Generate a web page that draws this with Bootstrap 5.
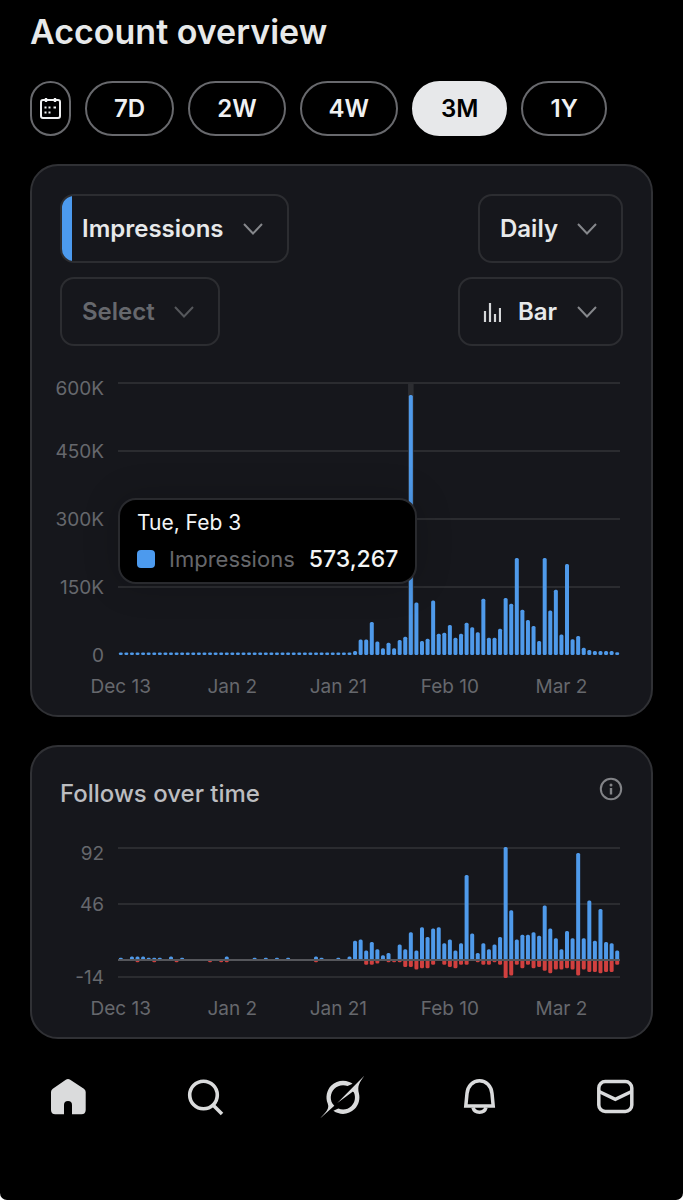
<!DOCTYPE html>
<html lang="en">
<head>
<meta charset="utf-8">
<meta name="viewport" content="width=device-width, initial-scale=1">
<title>Account overview</title>
<link rel="stylesheet" href="https://cdn.jsdelivr.net/npm/bootstrap@5.3.0/dist/css/bootstrap.min.css">
<style>
  :root { --accent: #4c9aee; --line: #2c2d31; --dim: #66686d; }
  body { background: #fff; font-family: Inter, "Liberation Sans", sans-serif; }
  .app { background: #000; color: #e7e9ea; border-radius: 0 0 7px 7px; }
  .page-body { padding: 12px 30px 0; }
  .page-title { font-size: 34px; line-height: 40px; font-weight: 600; margin: 0 0 29px; }
  .ranges { gap: 14px; margin-bottom: 28px; }
  .range-btn { height: 55px; border: 2px solid #68696d; border-radius: 28px; padding: 0 27px; color: #f0f1f2; background: #000; font-size: 24px; line-height: 30px; font-weight: 600; }
  .range-btn:hover { border-color: #68696d; color: #fff; }
  .range-btn.active { background: #e7e8ea; color: #000; border-color: #e7e8ea; }
  .range-btn.cal { padding: 0 7px; }
  .panel { background: #16171c; border: 2px solid #303135; border-radius: 28px; }
  .panel + .panel { margin-top: 28px; }
  .controls { gap: 14px; padding: 28px 28px 0; }
  .picker.form-select { height: 69px; width: auto; color: #e7e9ea; background-color: transparent; border: 2px solid var(--line); border-radius: 14px; padding: 0 63px 0 20px; font-size: 24px; line-height: 30px; font-weight: 600;
    background-image: var(--chevron); background-repeat: no-repeat; background-position: right 24px center; background-size: 20px 12px;
    --chevron: url("data:image/svg+xml,%3csvg xmlns='http://www.w3.org/2000/svg' viewBox='0 0 20 12'%3e%3cpath fill='none' stroke='%2385878b' stroke-width='2' d='M1 1l9 9.500 9-9.500'/%3e%3c/svg%3e"); }
  .picker.form-select.primary { background-image: var(--chevron), linear-gradient(var(--accent), var(--accent)); background-position: right 24px center, left center; background-size: 20px 12px, 10px 100%; }
  .picker.form-select.empty { color: var(--dim);
    --chevron: url("data:image/svg+xml,%3csvg xmlns='http://www.w3.org/2000/svg' viewBox='0 0 20 12'%3e%3cpath fill='none' stroke='%2355575b' stroke-width='2' d='M1 1l9 9.500 9-9.500'/%3e%3c/svg%3e"); }
  .picker.form-select.kind { padding-left: 58px;
    background-image: var(--chevron), url("data:image/svg+xml,%3csvg xmlns='http://www.w3.org/2000/svg' viewBox='0 0 18 20'%3e%3cpath fill='none' stroke='%23d5d7d9' stroke-width='2.200' d='M2 20V9M7 20V1M12 20v-8M17 20V6'/%3e%3c/svg%3e");
    background-position: right 24px center, left 23px center; background-size: 20px 12px, 18px 20px; }
  .chart { padding: 0 31px 16px 20px; color: var(--dim); font-size: 19px; line-height: 20px; display: grid; grid-template-columns: 52px minmax(0, 1fr); column-gap: 14px; }
  .chart.main { margin-top: 37px; }
  .y-axis { display: grid; justify-items: end; align-items: start; height: 272px; grid-template-rows: repeat(4, 68px) 0; }
  .y-axis.short { height: 129px; grid-template-rows: 56px 73px 0; }
  .y-axis span { margin-top: -9px; }
  .y-axis span:first-child { margin-top: -4px; }
  .plot svg { display: block; width: 100%; height: 272px; overflow: visible; }
  .plot.short svg { height: 129px; }
  .x-axis { grid-column: 2; display: grid; grid-template-columns: repeat(90, minmax(0, 1fr)); margin-top: 20px; line-height: 24px; }
  .x-axis span { justify-self: center; white-space: nowrap; grid-row: 1; }
  .tip { top: 115px; left: 0; background: #000; border: 2px solid #292a2e; border-radius: 18px; padding: 8px 17px; font-size: 22px; line-height: 30px; color: #f4f5f6; white-space: nowrap; box-shadow: 0 0 36px rgba(0,0,0,.18); }
  .tip-date { font-size: 21px; }
  .tip-row { margin-top: 6px; }
  .swatch { width: 18px; height: 18px; border-radius: 4px; background: var(--accent); margin-right: 14px; }
  .tip-name { color: #66676b; margin-right: 14px; }
  .tip-value { font-size: 23px; font-weight: 500; }
  .panel-head { padding: 28px 28px 0; height: 101px; }
  .panel-title { font-size: 24px; line-height: 38px; font-weight: 500; color: #bcbdc0; }
  .tabbar { margin-top: 36px; padding-bottom: 70px; color: #dadbdc; }
  .tab-link { flex: 1 1 0; display: flex; justify-content: center; color: inherit; }
</style>
</head>
<body>
<div class="app min-vh-100 d-flex flex-column">
  <main class="page-body">
    <h1 class="page-title">Account overview</h1>

    <div class="ranges d-flex">
      <button type="button" class="btn range-btn cal d-flex align-items-center" aria-label="Pick dates">
        <svg width="23" height="24" viewBox="0 0 23 24" fill="none" stroke="currentColor" stroke-width="2"><rect x="2" y="3" width="19" height="18" rx="2"/><path d="M7 1v4M16 1v4" stroke-width="2.400"/><path d="M9.500 10.500h2M14.500 10.500h2.500M5.500 10.500h2M5.500 15.500h2M9.500 15.500h2" stroke-width="2.200"/></svg>
      </button>
      <button type="button" class="btn range-btn">7D</button>
      <button type="button" class="btn range-btn">2W</button>
      <button type="button" class="btn range-btn">4W</button>
      <button type="button" class="btn range-btn active" aria-pressed="true">3M</button>
      <button type="button" class="btn range-btn">1Y</button>
    </div>

    <section class="panel" aria-label="Impressions">
      <div class="controls d-flex flex-column">
        <div class="d-flex justify-content-between">
          <select class="form-select picker primary" aria-label="Primary metric"><option>Impressions</option></select>
          <select class="form-select picker" aria-label="Interval"><option>Daily</option></select>
        </div>
        <div class="d-flex justify-content-between">
          <select class="form-select picker empty" aria-label="Secondary metric"><option>Select</option></select>
          <select class="form-select picker kind" aria-label="Chart type"><option>Bar</option></select>
        </div>
      </div>
      <div class="chart main">
        <div class="y-axis"><span>600K</span><span>450K</span><span>300K</span><span>150K</span><span>0</span></div>
        <div class="plot position-relative">
          <svg id="impressions" viewBox="0 0 502 272" preserveAspectRatio="none" role="img" aria-label="Daily impressions"></svg>
          <div class="tip position-absolute">
            <div class="tip-date">Tue, Feb 3</div>
            <div class="tip-row d-flex align-items-center"><span class="swatch"></span><span class="tip-name">Impressions</span><span class="tip-value">573,267</span></div>
          </div>
        </div>
        <div class="x-axis"></div>
      </div>
    </section>

    <section class="panel" aria-label="Follows over time">
      <div class="panel-head d-flex justify-content-between align-items-start">
        <h2 class="panel-title m-0">Follows over time</h2>
        <button type="button" class="btn p-0 border-0 d-flex" aria-label="About this chart">
          <svg width="24" height="28" viewBox="0 -2 24 28" fill="none" stroke="#828387" stroke-width="2"><circle cx="12" cy="12" r="10.200"/><path d="M12 11v6.500" stroke-width="2.400"/><circle cx="12" cy="8" r="1.500" fill="#828387" stroke="none"/></svg>
        </button>
      </div>
      <div class="chart">
        <div class="y-axis short"><span>92</span><span>46</span><span>-14</span></div>
        <div class="plot short">
          <svg id="follows" viewBox="0 0 502 129" preserveAspectRatio="none" role="img" aria-label="Daily follows and unfollows"></svg>
        </div>
        <div class="x-axis"></div>
      </div>
    </section>
  </main>

  <nav class="tabbar d-flex" aria-label="Main">
    <a href="#" class="tab-link" aria-label="Home"><svg width="44" height="44" viewBox="0 0 44 44" fill="currentColor"><path d="M19.800 4.700a4 4 0 0 1 4.400 0l13.700 9a4 4 0 0 1 1.800 3.300V35a4.300 4.300 0 0 1-4.300 4.200H26V30a4 4 0 0 0-8 0v9.200H9.300A4.300 4.300 0 0 1 5 35V17a4 4 0 0 1 1.800-3.300z"/></svg></a>
    <a href="#" class="tab-link" aria-label="Search"><svg width="44" height="44" viewBox="0 0 44 44" fill="none" stroke="currentColor" stroke-width="3.600"><circle cx="20.500" cy="20" r="13.800"/><path d="M30 30l9 9"/></svg></a>
    <a href="#" class="tab-link" aria-label="Grok"><svg width="44" height="44" viewBox="-1 0 33 32" overflow="visible" fill="currentColor"><path d="M12.745 20.540l10.970-8.190c.539-.4 1.307-.244 1.564.38 1.349 3.288.746 7.241-1.938 9.955-2.683 2.714-6.417 3.310-9.830 1.954l-3.728 1.745c5.347 3.697 11.840 2.782 15.898-1.324 3.219-3.255 4.216-7.692 3.284-11.693l.008.009c-1.351-5.878.332-8.227 3.782-13.031L33 0l-4.540 4.590v-.014L12.743 20.544m-2.263 1.987c-3.837-3.707-3.175-9.446.1-12.755 2.420-2.449 6.388-3.448 9.852-1.979l3.720-1.737c-.67-.49-1.530-1.017-2.515-1.387-4.455-1.854-9.789-.931-13.410 2.728-3.483 3.523-4.579 8.940-2.697 13.561 1.405 3.454-.899 5.898-3.220 8.364C1.490 30.200.666 31.074 0 32l10.478-9.466"/></svg></a>
    <a href="#" class="tab-link" aria-label="Notifications"><svg width="44" height="44" viewBox="0 0 44 44" fill="none" stroke="currentColor" stroke-width="3.500"><path d="M9.800 31L11 18.500C11.700 11 17 5.800 23.500 5.800S35.300 11 36 18.500L37.200 31z"/><path d="M17 32.500a6.700 6.200 0 0 0 13 0"/></svg></a>
    <a href="#" class="tab-link" aria-label="Messages"><svg width="44" height="44" viewBox="0 0 44 44" fill="none" stroke="currentColor" stroke-width="3.500"><rect x="5.800" y="6.500" width="33" height="30" rx="6.500"/><path d="M6 16.500l16.300 7.800 16.300-7.800"/></svg></a>
  </nav>
</div>
<script src="https://cdn.jsdelivr.net/npm/bootstrap@5.3.0/dist/js/bootstrap.bundle.min.js"></script>
<script>
  const DAYS = 90, STEP = 502 / DAYS;
  // Daily impressions in thousands, Dec 13 onwards
  const impressions = Array(42).fill(2).concat([
    9,34,34,73,30,15,27,15,33,40,573.267,116,31,36,120,47,49,66,38,47,71,61,50,124,38,38,58,126,113,214,100,
    77,64,31,214,98,144,45,201,35,42,16,11,9,9,9,9,6]);
  const gained = [1,0,2,2,2,1,1,1,0,2,0,1,0,0,0,0,0,0,0,2,0,0,0,0,1,0,1,0,1,0,1,0,0,0,0,2,1,0,0,1,0,2,
    15,16,7,14,8,3,5,0,12,8,22,7,26,18,25,26,13,16,7,13,69,21,5,13,8,12,18,92,40,16,20,20,22,19,44,25,17,8,23,17,87,17,48,15,41,14,13,7];
  const lost = Array(DAYS).fill(0);
  [3,6,10,16,18,19,35].forEach(i => lost[i] = 1);
  [3,3,2,0,1,1,1,5,5,7,6,6,3,0,3,5,6,3,3,0,1,3,3,1,3,14,12,3,6,3,6,5,8,10,7,7,6,7,12,7,9,9,10,9,9,3]
    .forEach((v, k) => lost[44 + k] = v);

  const rect = (x, y, w, h, fill, r) => `<rect x="${x}" y="${y}" width="${w}" height="${h}" rx="${r}" fill="${fill}"/>`;
  const bar = (i, y, h, fill) => rect(i * STEP + STEP / 2 - 2, y, 4, h, fill, 1.5);
  const line = (y, c = '#2b2c30') => rect(0, y - 1, 502, 2, c, 0);

  let out = [0, 68, 136, 204].map(y => line(y)).join('') + rect(52 * STEP, 0, STEP, 272, '#2c2d31', 0);
  impressions.forEach((v, i) => { const h = Math.max(2.5, v / 600 * 272); out += bar(i, 272 - h, h, '#4f9aea'); });
  document.getElementById('impressions').innerHTML = out;

  const zero = 112, unit = 112 / 92;
  out = line(0) + line(56) + line(129);
  gained.forEach((v, i) => { if (v) out += bar(i, zero - v * unit - 1, v * unit + 1, '#4f9aea'); });
  lost.forEach((v, i) => { if (v) out += bar(i, zero - 1, v * unit + 2, '#d0403f'); });
  out += line(zero, '#55565b');
  document.getElementById('follows').innerHTML = out;

  const ticks = [[0, 'Dec 13'], [20, 'Jan 2'], [39, 'Jan 21'], [59, 'Feb 10'], [79, 'Mar 2']];
  document.querySelectorAll('.x-axis').forEach(axis => {
    axis.innerHTML = ticks.map(([i, t]) => `<span style="grid-column:${i + 1}">${t}</span>`).join('');
  });
</script>
</body>
</html>
